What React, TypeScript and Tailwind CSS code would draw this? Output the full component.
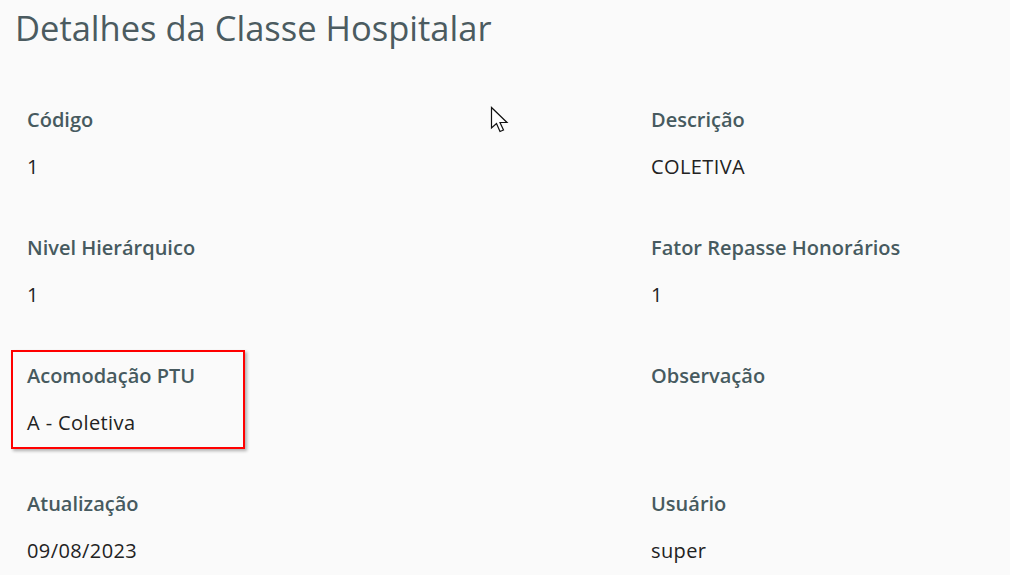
import React from 'react';

const fields: { label: string; value: string; highlight?: boolean }[] = [
  { label: 'Código', value: '1' },
  { label: 'Descrição', value: 'COLETIVA' },
  { label: 'Nivel Hierárquico', value: '1' },
  { label: 'Fator Repasse Honorários', value: '1' },
  { label: 'Acomodação PTU', value: 'A - Coletiva', highlight: true },
  { label: 'Observação', value: '' },
  { label: 'Atualização', value: '09/08/2023' },
  { label: 'Usuário', value: 'super' },
];

const Cursor = () => (
  <svg className="absolute left-[490px] top-[106px]" width="22" height="30" viewBox="0 0 22 30">
    <path d="M1.5 1.5 L1.5 22 L6.5 17.5 L10 25.5 L13.5 24 L10 16.5 L17 16.5 Z" fill="#fff" stroke="#111" strokeWidth="1.2" strokeLinejoin="miter" />
  </svg>
);

const App: React.FC = () => {
  return (
    <div className="relative w-[1010px] h-[575px] overflow-hidden bg-[#fafafa] font-['Open_Sans','Lato',sans-serif]">
      <h1 className="pl-[15px] pt-[8px] text-[34.5px] leading-[40px] text-[#4b5b60]">
        Detalhes da Classe Hospitalar
      </h1>
      <div className="grid grid-cols-[624px_1fr] pl-[27px] pt-[60px]">
        {fields.map((f) => (
          <div key={f.label} className="relative h-[128px]">
            {f.highlight && (
              <div className="absolute left-[-16px] top-[-14px] w-[234px] h-[99px] border-2 border-[#f00] shadow-[2px_2px_3px_rgba(0,0,0,0.3)]" />
            )}
            <div className="text-[20px] leading-[24px] font-semibold text-[#475a5f]">{f.label}</div>
            <div className="mt-[23px] text-[20px] leading-[24px] tracking-[0.4px] text-[#222]">{f.value}</div>
          </div>
        ))}
      </div>
      <Cursor />
    </div>
  );
};

export default App;
